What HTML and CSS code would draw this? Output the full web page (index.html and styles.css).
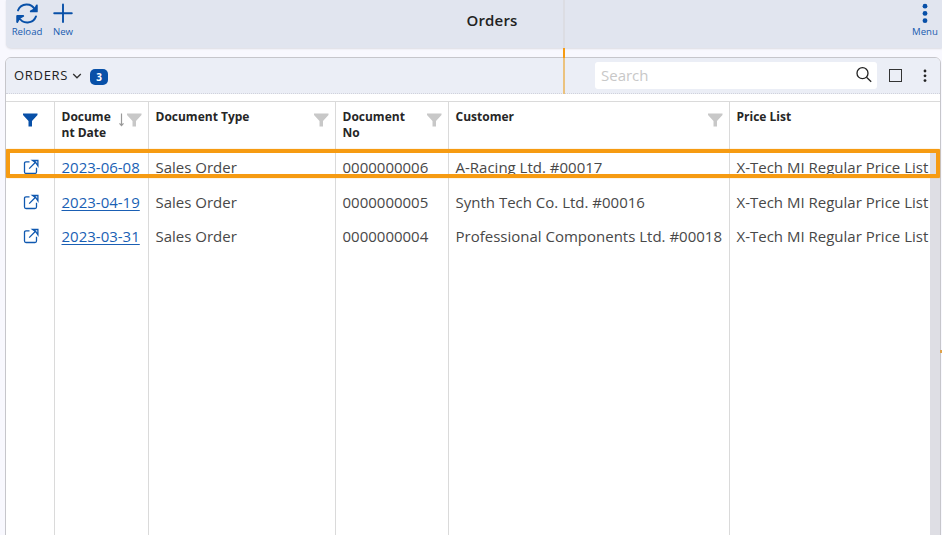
FILE: index.html
```html
<!DOCTYPE html>
<html lang="en">
<head>
<meta charset="utf-8">
<title>Orders</title>
<link rel="stylesheet" href="styles.css">
</head>
<body>
<svg class="defs" width="0" height="0">
  <symbol id="funnel" viewBox="0 0 15 14"><path d="M0 0.5h14.5v1.5L9 8v5.5H5.5V8L0 2z"/></symbol>
  <symbol id="open" viewBox="0 0 16 16"><path d="M6.5 2.8H3Q1.5 2.8 1.5 4.3V13Q1.5 14.5 3 14.5H12Q13.5 14.5 13.5 13V8.8M6.2 9.6 13 2.8M9.6 1.5H14.9V6.8L12.8 3.7Z"/></symbol>
</svg>
<header class="toolbar">
  <div class="tool reload">
    <svg width="24" height="24" viewBox="0 0 24 24"><path d="M3 8.4A9.3 9.3 0 0 1 20 7.8M21.8 3.4v6h-6l4-2.2zM21 14.4A9.3 9.3 0 0 1 4 15.4M2.2 20v-6h6l-4 2.2z"/></svg>
    <span>Reload</span>
  </div>
  <div class="tool new">
    <svg width="24" height="24" viewBox="0 0 24 24"><path d="M12 2.5v17.5M3.2 11.3h17.6"/></svg>
    <span>New</span>
  </div>
  <h1>Orders</h1>
  <div class="tool menu">
    <svg width="24" height="24" viewBox="0 0 24 24"><circle cx="12" cy="4.2" r="2.4"/><circle cx="12" cy="11.4" r="2.4"/><circle cx="12" cy="18.7" r="2.4"/></svg>
    <span>Menu</span>
  </div>
</header>
<main class="panel">
  <div class="panel-head">
    <span class="caption">ORDERS</span>
    <svg class="chevron" width="10" height="8" viewBox="0 0 10 8"><path d="M1.2 2 5 5.8 8.8 2"/></svg>
    <span class="badge">3</span>
    <div class="search"><span>Search</span>
      <svg width="18" height="18" viewBox="0 0 18 18"><circle cx="7.5" cy="7.2" r="5.5"/><path d="M11.5 11.3 16.2 15.8"/></svg>
    </div>
    <i class="box"></i>
    <svg class="dots" width="6" height="14" viewBox="0 0 6 14"><circle cx="3" cy="2" r="1.4"/><circle cx="3" cy="6.8" r="1.4"/><circle cx="3" cy="11.6" r="1.4"/></svg>
  </div>
  <div class="grid">
    <div class="col">
      <div class="th"><svg class="funnel on"><use href="#funnel"/></svg></div>
      <div class="td"><svg class="open"><use href="#open"/></svg></div>
      <div class="td"><svg class="open"><use href="#open"/></svg></div>
      <div class="td"><svg class="open"><use href="#open"/></svg></div>
    </div>
    <div class="col">
      <div class="th"><span>Docume<br>nt Date</span><svg class="sort" width="7" height="14" viewBox="0 0 7 14"><path d="M3.5 0.5V12M1.5 10.4 3.5 12.6 5.5 10.4"/></svg><svg class="funnel"><use href="#funnel"/></svg></div>
      <div class="td"><a>2023-06-08</a></div><div class="td"><a>2023-04-19</a></div><div class="td"><a>2023-03-31</a></div>
    </div>
    <div class="col">
      <div class="th"><span>Document Type</span><svg class="funnel"><use href="#funnel"/></svg></div>
      <div class="td">Sales Order</div><div class="td">Sales Order</div><div class="td">Sales Order</div>
    </div>
    <div class="col">
      <div class="th"><span>Document<br>No</span><svg class="funnel"><use href="#funnel"/></svg></div>
      <div class="td">0000000006</div><div class="td">0000000005</div><div class="td">0000000004</div>
    </div>
    <div class="col">
      <div class="th"><span>Customer</span><svg class="funnel"><use href="#funnel"/></svg></div>
      <div class="td">A-Racing Ltd. #00017</div><div class="td">Synth Tech Co. Ltd. #00016</div><div class="td">Professional Components Ltd. #00018</div>
    </div>
    <div class="col last">
      <div class="th"><span>Price List</span></div>
      <div class="td">X-Tech MI Regular Price List</div><div class="td">X-Tech MI Regular Price List</div><div class="td">X-Tech MI Regular Price List</div>
      <div class="scroll"></div>
    </div>
  </div>
</main>
<div class="highlight"></div>
<div class="guide"></div>
<div class="tick"></div>
</body>
</html>
```

FILE: styles.css
```css
* { box-sizing: border-box; }
body {
  margin: 0;
  height: 535px;
  overflow: hidden;
  position: relative;
  background: #f8f8fe;
  font-family: "Open Sans", sans-serif;
  color: #484848;
}
.defs { position: absolute; }
svg { display: block; flex: none; }
.toolbar {
  display: flex;
  height: 48px;
  margin-left: 6px;
  background: #e1e5ef;
  border-bottom-left-radius: 5px;
  box-shadow: 0 1px 2px #dcdce2;
}
.tool {
  display: flex;
  flex-direction: column;
  align-items: center;
  padding-top: 2px;
  width: 36px;
  color: #1a5cb0;
  font-size: 9.6px;
  line-height: 12px;
}
.reload { margin-left: 3px; }
.tool span { white-space: nowrap; }
.tool path { fill: none; stroke: #0850a8; stroke-width: 1.9; stroke-linecap: round; stroke-linejoin: round; }
.tool circle { fill: #0850a8; }
.toolbar h1 {
  flex: 1;
  margin: 0 8px 0 0;
  padding-left: 4px;
  text-align: center;
  font-size: 15px;
  font-weight: 600;
  letter-spacing: .15px;
  line-height: 40px;
  color: #222;
}
.menu { margin-right: -1px; }
.panel {
  width: 936px;
  height: 500px;
  margin: 9px 0 0 5px;
  border: 1px solid #c6c6cb;
  border-radius: 6px 6px 0 0;
  background: #fff;
  overflow: hidden;
}
.panel-head {
  display: flex;
  align-items: center;
  height: 36px;
  padding-left: 8px;
  background: #ebeef6;
  border-bottom: 1px dotted #d0d2dc;
}
.caption { margin-top: -1px; font-size: 13px; letter-spacing: .7px; color: #222; }
.chevron { margin: 1px 0 0 4px; }
.chevron path { fill: none; stroke: #333; stroke-width: 1.3; }
.badge {
  width: 18px;
  height: 16px;
  margin: 2px 0 0 8px;
  border-radius: 5px;
  background: #0850a8;
  color: #fff;
  font-size: 10px;
  font-weight: 700;
  line-height: 16px;
  text-align: center;
}
.search {
  display: flex;
  align-items: center;
  justify-content: space-between;
  width: 282px;
  height: 27px;
  margin-left: auto;
  padding: 0 4px 2px 6px;
  border-radius: 3px;
  background: #fff;
  color: #c8c8c8;
  font-size: 15px;
}
.search circle, .search path { fill: none; stroke: #222; stroke-width: 1.3; }
.box { width: 13px; height: 13px; margin-left: 12px; border: 1px solid #333; }
.dots { margin: 0 12px 0 20px; }
.dots circle { fill: #222; }
.grid {
  display: grid;
  grid-template-columns: 49px 94px 187px 113px 281px 1fr;
  height: 434px;
  margin-top: 7px;
  border-top: 1px solid #dadada;
}
.col { border-right: 1px solid #dadada; }
.last { position: relative; border-right: 0; }
.th {
  display: flex;
  height: 48px;
  padding: 7px 6px 0 6.5px;
  font-size: 12px;
  font-weight: 700;
  line-height: 16px;
  white-space: nowrap;
  color: #262626;
  border-bottom: 1px solid #dadada;
}
.funnel { width: 15px; height: 14px; margin: 3.5px 0 0 auto; fill: #c8c8c8; }
.funnel.on { margin: 3.5px auto 0 10.5px; fill: #0850a8; }
.sort { margin: 4px 0 0 auto; }
.sort + .funnel { margin-left: 2px; }
.sort path { fill: none; stroke: #999; stroke-width: 1.2; }
.td {
  display: flow-root;
  height: 34.5px;
  padding-left: 6.5px;
  font-size: 15px;
  line-height: 34.5px;
  white-space: nowrap;
}
.td a { color: #1a5fb4; text-decoration: underline; text-underline-offset: 2px; }
.open { width: 16px; height: 16px; margin: 9px 0 0 10px; fill: none; stroke: #0f58b0; stroke-width: 1.3; }
.scroll { position: absolute; top: 48px; right: 0; width: 10px; bottom: 0; background: #dedee4; }
.highlight {
  position: absolute;
  left: 6px;
  top: 148.5px;
  width: 933.5px;
  height: 29.5px;
  border: 4px solid #f69b12;
  border-radius: 1px;
  box-shadow: 0 0 1px #f69b12;
}
.guide {
  position: absolute;
  left: 563px;
  top: 0;
  width: 2px;
  height: 94px;
  background: linear-gradient(#dcdde3 48px, #f69b12 48px 58px, #ebc27e 58px);
}
.tick { position: absolute; right: 0; top: 350px; width: 2px; height: 3px; background: #dfa24a; }
```
